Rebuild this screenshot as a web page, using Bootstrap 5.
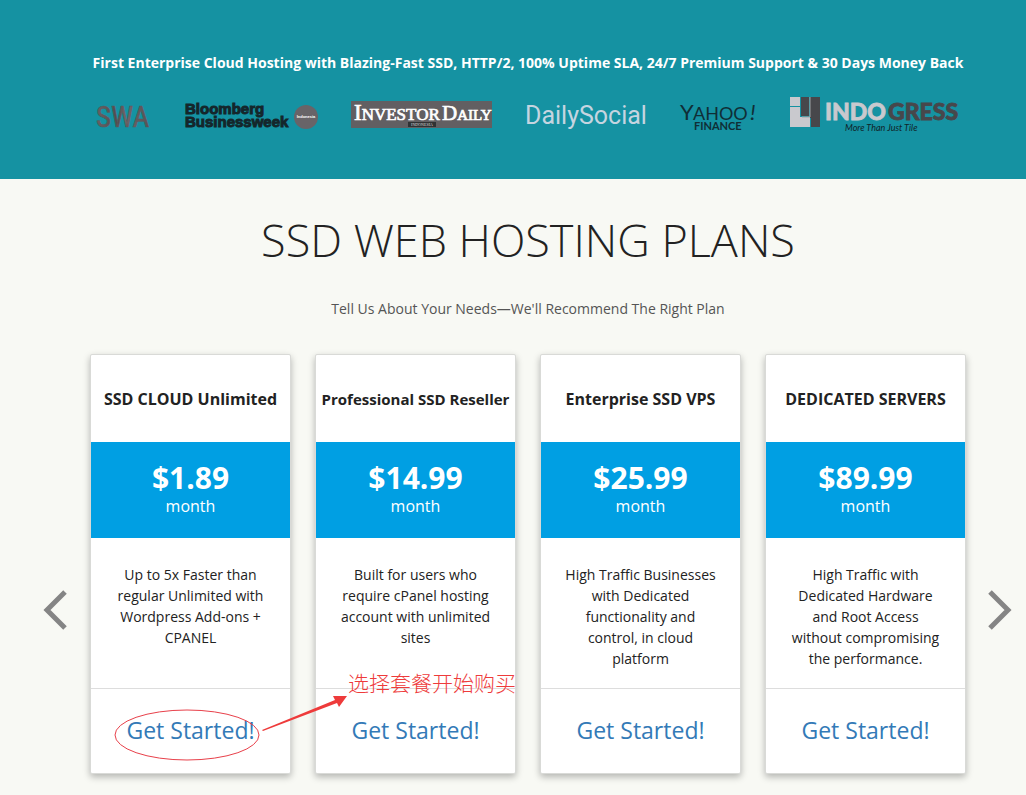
<!DOCTYPE html>
<html lang="en">
<head>
<meta charset="utf-8">
<meta name="viewport" content="width=device-width, initial-scale=1">
<title>SSD Web Hosting Plans</title>
<link href="https://cdn.jsdelivr.net/npm/bootstrap@5.3.0/dist/css/bootstrap.min.css" rel="stylesheet">
<style>
  body { font-family: "Open Sans", sans-serif; font-size: 14px; line-height: 21px; color: #222; background: #f8f9f4; }
  .press { background: #1592a2; padding: 52px 60px 46px 90px; }
  .press-line { font-size: 14px; font-weight: 700; line-height: 21px; color: #fff; margin-bottom: 24px; }
  .press-logos { padding: 0 9px 0 7px; }
  .press-logos svg { display: block; overflow: visible; }
  .plans-head { padding: 31px 60px 0 90px; }
  .plans-title { font-size: 45px; font-weight: 300; line-height: 60px; color: #222; margin-bottom: 28px; }
  .plans-lead { line-height: 21px; color: #555; margin-bottom: 35px; }
  .arrow-btn { border: 0; padding: 92px 0 0; background: none; line-height: 0; }
  .arrow-prev { width: 90px; text-align: right; padding-right: 23px; }
  .arrow-next { width: 60px; text-align: left; padding-left: 22px; }
  .plan-grid { display: grid; grid-template-columns: repeat(4, minmax(0, 1fr)); gap: 24px; }
  .plan { background: #fff; border: 1px solid #d9dad7; border-radius: 2px; box-shadow: 0 3px 7px rgba(0,0,0,.28); }
  .plan-name { font-size: 16px; font-weight: 700; line-height: 24px; padding: 32px 0 31px; margin: 0; white-space: nowrap; }
  .plan-name-long { font-size: 15px; }
  .plan-price { background: #009fe3; color: #fff; padding: 19px 0 20px; }
  .plan-price strong { display: block; font-size: 30px; line-height: 34px; font-weight: 700; }
  .plan-price span { display: block; font-size: 16px; line-height: 23px; }
  .plan-text { min-height: 150px; padding: 26px 22px 19px; margin: 0; }
  .plan-foot { border-top: 1px solid #ddd; padding: 25px 0 26px; }
  .plan-foot a { font-size: 23px; line-height: 33px; color: #337ab7; text-decoration: none; }
  .note-mark { left: 20px; top: -20px; overflow: visible; pointer-events: none; z-index: 2; }
  .note-text { left: 257px; top: -22px; z-index: 2; font: 300 21px/30px "Noto Sans CJK SC", sans-serif; color: #ee3b3b; white-space: nowrap; }
</style>
</head>
<body>
<header class="press text-center">
  <p class="press-line">First Enterprise Cloud Hosting with Blazing-Fast SSD, HTTP/2, 100% Uptime SLA, 24/7 Premium Support &amp; 30 Days Money Back</p>
  <div class="press-logos d-flex justify-content-between align-items-center">
    <svg width="53" height="36" role="img" aria-label="SWA">
      <defs><linearGradient id="swa" x1="0" x2="1"><stop offset="0" stop-color="#6b6265"/><stop offset=".4" stop-color="#504a4d"/><stop offset=".55" stop-color="#75686c"/><stop offset="1" stop-color="#555053"/></linearGradient></defs>
      <text x="-1" y="30" font-family="Liberation Sans Narrow, Roboto Condensed, Open Sans" font-size="29" fill="url(#swa)" stroke="#5f575a" stroke-width=".6">SWA</text>
    </svg>
    <svg width="134" height="36" role="img" aria-label="Bloomberg Businessweek Indonesia">
      <g font-family="Liberation Sans" font-weight="700" fill="#14262b" stroke="#14262b" stroke-width="1"><text x="1" y="17" font-size="15">Bloomberg</text><text x="1" y="30" font-size="15">Businessweek</text></g>
      <circle cx="122" cy="20" r="12" fill="#686468"/>
      <text x="122" y="21" text-anchor="middle" font-family="Liberation Sans" font-weight="700" font-size="4" fill="#fff">Indonesia</text>
    </svg>
    <svg width="141" height="36" role="img" aria-label="Investor Daily Indonesia">
      <rect y="4" width="141" height="27" fill="#625f62"/>
      <g font-family="Liberation Serif" fill="#fff" stroke="#fff" stroke-width=".7"><text x="3" y="23" font-size="23">I<tspan font-size="17">NVESTOR</tspan></text><text x="91" y="23" font-size="21">D<tspan font-size="15">AILY</tspan></text></g>
      <rect x="57" y="25" width="28" height="5" fill="#303234"/>
      <text x="71" y="29" text-anchor="middle" font-family="Liberation Serif" font-size="4" fill="#ddd">INDONESIA</text>
    </svg>
    <svg width="122" height="36" role="img" aria-label="DailySocial">
      <text x="-1" y="27" font-family="Roboto" font-size="25" fill="#c5d5e0">DailySocial</text>
    </svg>
    <svg width="75" height="36" role="img" aria-label="Yahoo Finance">
      <g font-family="Lato" fill="#102e36"><text x="-1" y="23" font-size="22">Y</text><text x="12" y="23" font-size="18">AHOO</text><text x="69" y="23" font-size="22" font-style="italic">!</text><text x="13" y="33" font-size="11" font-weight="700">FINANCE</text></g>
    </svg>
    <svg width="167" height="36" role="img" aria-label="Indogress, More Than Just Tile">
      <path d="M0 0h10v9H0zM0 10h10v10h10v10H0z" fill="#c9c9ce"/>
      <path d="M11 0h8v19h-8zM20 0h10v30h-9v-9h-1z" fill="#47474b"/>
      <path d="M20 0v20h-8" fill="none" stroke="#a0a3a6"/>
      <g font-family="Lato" font-weight="900" font-size="23" stroke-width=".8"><text x="35" y="23" fill="#c9c9ce" stroke="#c9c9ce">INDO</text><text x="98" y="23" fill="#47474b" stroke="#47474b">GRESS</text></g>
      <text x="55" y="34" font-family="Lato" font-style="italic" font-size="9" fill="#102429">More Than Just Tile</text>
    </svg>
  </div>
</header>

<main>
  <div class="plans-head text-center">
    <h1 class="plans-title">SSD WEB HOSTING PLANS</h1>
    <p class="plans-lead">Tell Us About Your Needs—We'll Recommend The Right Plan</p>
  </div>
  <div class="d-flex align-items-center text-center pb-3">
    <button type="button" class="arrow-btn arrow-prev flex-shrink-0" aria-label="Previous plans"><svg width="24" height="40" fill="none" stroke="#858585" stroke-width="5"><path d="M22 2 4 20l18 18"/></svg></button>
    <div class="plan-grid flex-grow-1">
      <section class="plan">
        <h2 class="plan-name">SSD CLOUD Unlimited</h2>
        <div class="plan-price"><strong>$1.89</strong><span>month</span></div>
        <p class="plan-text">Up to 5x Faster than regular Unlimited with Wordpress Add-ons + CPANEL</p>
        <div class="plan-foot position-relative">
          <a href="#">Get Started!</a>
          <svg class="note-mark position-absolute" width="240" height="90" fill="none" aria-hidden="true">
            <ellipse cx="76" cy="66" rx="72" ry="25" stroke="#e8404a"/>
            <path d="M151 61 224 31 222 27 236 27 228 38 226 34 152 62z" fill="#ee3b3b"/>
          </svg>
          <span class="note-text position-absolute" lang="zh-CN">选择套餐开始购买</span>
        </div>
      </section>
      <section class="plan">
        <h2 class="plan-name plan-name-long">Professional SSD Reseller</h2>
        <div class="plan-price"><strong>$14.99</strong><span>month</span></div>
        <p class="plan-text">Built for users who require cPanel hosting account with unlimited sites</p>
        <div class="plan-foot"><a href="#">Get Started!</a></div>
      </section>
      <section class="plan">
        <h2 class="plan-name">Enterprise SSD VPS</h2>
        <div class="plan-price"><strong>$25.99</strong><span>month</span></div>
        <p class="plan-text">High Traffic Businesses with Dedicated functionality and control, in cloud platform</p>
        <div class="plan-foot"><a href="#">Get Started!</a></div>
      </section>
      <section class="plan">
        <h2 class="plan-name">DEDICATED SERVERS</h2>
        <div class="plan-price"><strong>$89.99</strong><span>month</span></div>
        <p class="plan-text">High Traffic with Dedicated Hardware and Root Access without compromising the performance.</p>
        <div class="plan-foot"><a href="#">Get Started!</a></div>
      </section>
    </div>
    <button type="button" class="arrow-btn arrow-next flex-shrink-0" aria-label="Next plans"><svg width="24" height="40" fill="none" stroke="#858585" stroke-width="5"><path d="m2 2 18 18L2 38"/></svg></button>
  </div>
</main>
<script src="https://cdn.jsdelivr.net/npm/bootstrap@5.3.0/dist/js/bootstrap.bundle.min.js"></script>
</body>
</html>
